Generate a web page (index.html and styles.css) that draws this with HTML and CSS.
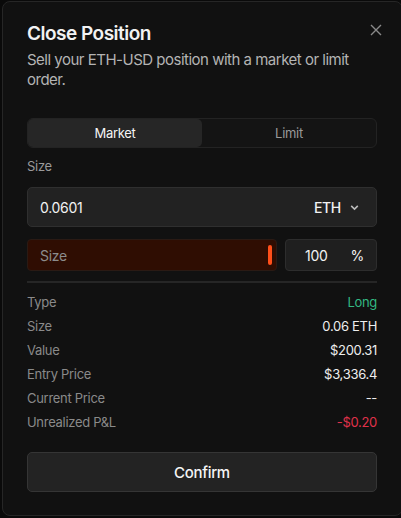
FILE: index.html
```html
<!DOCTYPE html>
<html>
    <head>
        <link rel="stylesheet" href="styles.css">
        <title>Close Position</title>
    </head>
    <body>
        <div class="modal">
            <button class="close" aria-label="Close">
                <svg width="12" height="12" viewBox="0 0 12 12"><path d="M1 1L11 11M11 1L1 11" stroke="currentColor" stroke-width="1.4" fill="none"/></svg>
            </button>
            <h1 class="title">Close Position</h1>
            <p class="subtitle">Sell your ETH-USD position with a market or limit order.</p>

            <div class="tabs">
                <div class="tab active">Market</div>
                <div class="tab">Limit</div>
            </div>

            <div class="label">Size</div>
            <div class="amount">
                <span class="amount-value">0.0601</span>
                <span class="unit">ETH
                    <svg width="11" height="11" viewBox="0 0 10 10"><path d="M2 3.5L5 6.5L8 3.5" stroke="currentColor" stroke-width="1.4" fill="none"/></svg>
                </span>
            </div>

            <div class="slider-row">
                <div class="slider">
                    <span class="placeholder">Size</span>
                    <span class="thumb"></span>
                </div>
                <div class="percent">
                    <span>100</span>
                    <span class="pct">%</span>
                </div>
            </div>

            <div class="divider"></div>

            <div class="details">
                <div class="row"><span>Type</span><span class="long">Long</span></div>
                <div class="row"><span>Size</span><span class="val">0.06 ETH</span></div>
                <div class="row"><span>Value</span><span class="val">$200.31</span></div>
                <div class="row"><span>Entry Price</span><span class="val">$3,336.4</span></div>
                <div class="row"><span>Current Price</span><span class="val">--</span></div>
                <div class="row"><span>Unrealized P&amp;L</span><span class="loss">-$0.20</span></div>
            </div>

            <button class="confirm">Confirm</button>
        </div>
    </body>
</html>
```

FILE: styles.css
```css
body {
    margin: 0;
    padding: 0;
    background-color: #0a0a0a;
    font-family: Inter, "Noto Sans", sans-serif;
    overflow: hidden;
}

.modal {
    position: relative;
    box-sizing: border-box;
    width: 401px;
    height: 515px;
    margin: 1px 0 0 2px;
    padding: 18px 25px 0 24px;
    background-color: #111111;
    border: 1px solid #262626;
    border-radius: 8px;
    color: #f2f2f2;
    letter-spacing: -0.3px;
}

.close {
    position: absolute;
    top: 22px;
    right: 20px;
    padding: 0;
    background: none;
    border: none;
    color: #8a8a8a;
    display: flex;
}

.title {
    margin: 0;
    font-size: 19px;
    line-height: 28px;
    font-weight: 600;
    letter-spacing: -0.5px;
}

.subtitle {
    margin: 2px 0 0;
    font-size: 15px;
    line-height: 20px;
    color: #b4b4b4;
    letter-spacing: -0.5px;
}

.tabs {
    display: flex;
    margin-top: 28px;
    height: 30px;
    box-sizing: border-box;
    border: 1px solid #232323;
    border-radius: 6px;
    background-color: #141414;
}

.tab {
    flex: 1;
    display: flex;
    align-items: center;
    justify-content: center;
    font-size: 13px;
    color: #9a9a9a;
}

.tab.active {
    background-color: #262626;
    color: #f5f5f5;
    border-radius: 5px;
}

.label {
    margin-top: 9px;
    font-size: 13px;
    line-height: 18px;
    color: #9a9a9a;
}

.amount {
    margin-top: 12px;
    height: 40px;
    box-sizing: border-box;
    display: flex;
    align-items: center;
    justify-content: space-between;
    padding: 0 16px 0 12px;
    background-color: #222222;
    border: 1px solid #2f2f2f;
    border-radius: 5px;
    font-size: 14px;
}

.unit {
    display: flex;
    align-items: center;
    gap: 8px;
    font-size: 14px;
    font-weight: 500;
}

.unit svg {
    color: #bbbbbb;
}

.slider-row {
    display: flex;
    gap: 8px;
    margin-top: 12px;
    height: 32px;
}

.slider {
    flex: 1;
    display: flex;
    align-items: center;
    justify-content: space-between;
    padding: 0 4px 0 12px;
    box-sizing: border-box;
    background-color: #2f0d02;
    border: 1px solid #2a1a14;
    border-radius: 4px;
    font-size: 14px;
    color: #8c8c8c;
}

.thumb {
    width: 4px;
    height: 20px;
    background-color: #ff4f1a;
    border-radius: 2px;
}

.percent {
    width: 92px;
    box-sizing: border-box;
    display: flex;
    align-items: center;
    justify-content: space-between;
    padding: 0 12px 0 19px;
    background-color: #1f1f1f;
    border: 1px solid #2d2d2d;
    border-radius: 4px;
    font-size: 14px;
}

.pct {
    font-size: 14px;
}

.divider {
    margin-top: 10px;
    height: 2px;
    background-color: #262626;
}

.details {
    margin-top: 7px;
}

.row {
    display: flex;
    justify-content: space-between;
    font-size: 13px;
    line-height: 24px;
    color: #8a8a8a;
}

.val {
    color: #eeeeee;
}

.long {
    color: #33b882;
}

.loss {
    color: #e0314b;
}

.confirm {
    display: block;
    width: 100%;
    margin-top: 18px;
    height: 40px;
    background-color: #232323;
    border: 1px solid #353535;
    border-radius: 5px;
    color: #f5f5f5;
    font-family: Inter, "Noto Sans", sans-serif;
    font-size: 15px;
    font-weight: 500;
    letter-spacing: -0.3px;
}
```
